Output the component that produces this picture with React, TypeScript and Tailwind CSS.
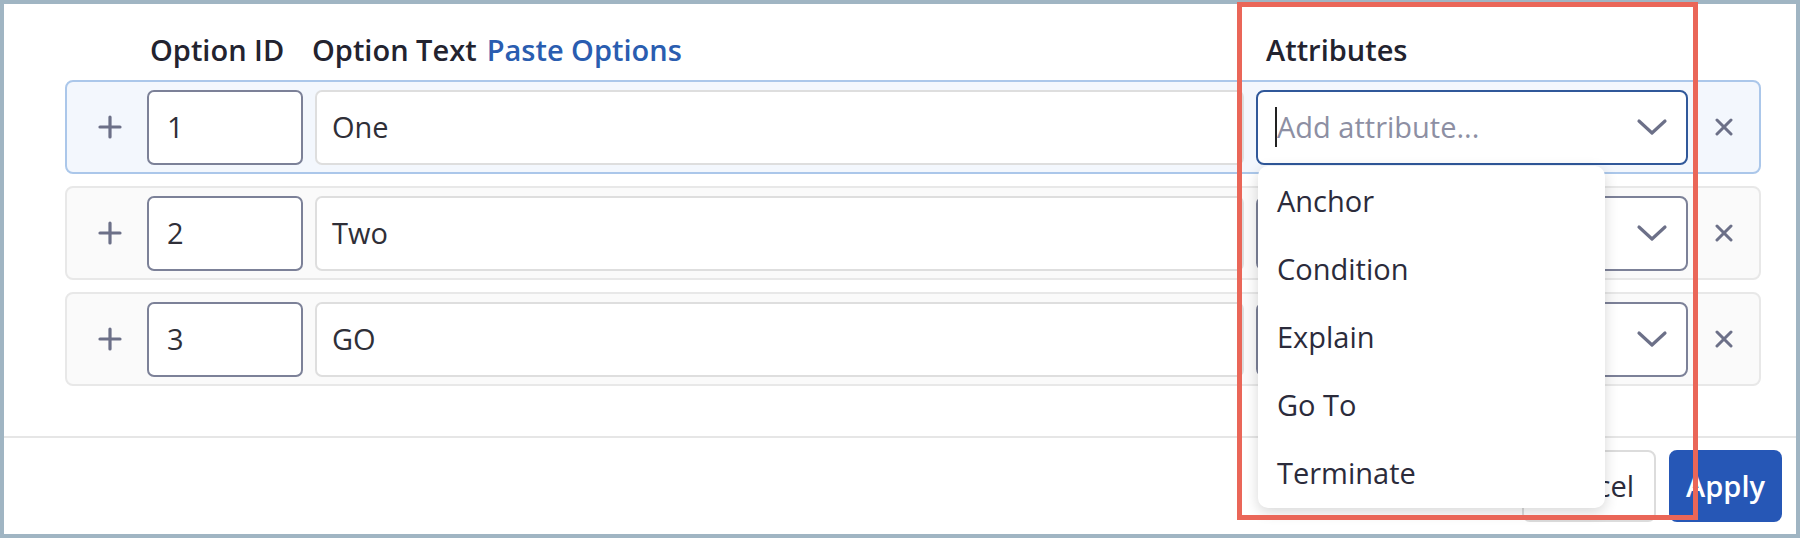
const rows = [
  { id: "1", text: "One", active: true },
  { id: "2", text: "Two", active: false },
  { id: "3", text: "GO", active: false },
];

const attributes = ["Anchor", "Condition", "Explain", "Go To", "Terminate"];

const PlusIcon = () => (
  <svg width="24" height="24" viewBox="0 0 24 24" fill="none" stroke="#6c7088" strokeWidth="3.2" strokeLinecap="round">
    <line x1="12" y1="2" x2="12" y2="22" />
    <line x1="2" y1="12" x2="22" y2="12" />
  </svg>
);

const CloseIcon = () => (
  <svg width="18" height="18" viewBox="0 0 18 18" fill="none" stroke="#6c7088" strokeWidth="3" strokeLinecap="round">
    <line x1="2" y1="2" x2="16" y2="16" />
    <line x1="16" y1="2" x2="2" y2="16" />
  </svg>
);

const Chevron = () => (
  <svg width="32" height="18" viewBox="0 0 32 18" fill="none" stroke="#6c7088" strokeWidth="3.2" strokeLinecap="round" strokeLinejoin="round">
    <polyline points="3,3 16,15 29,3" />
  </svg>
);

const AttributeMenu = () => (
  <div className="absolute left-[2px] top-full z-10 mt-[1px] w-[347px] rounded-[10px] bg-white py-[1px] shadow-[0_4px_14px_rgba(0,0,0,0.16)]">
    {attributes.map((a) => (
      <div key={a} className="flex h-[68px] items-center pl-[19px] text-[29px] text-[#2b2b3b]">
        {a}
      </div>
    ))}
  </div>
);

const OptionRow = ({ id, text, active }: { id: string; text: string; active: boolean }) => (
  <div
    className={
      active
        ? "flex h-[94px] items-center rounded-[8px] border-2 border-[#abc7ea] bg-[#f3f7fd]"
        : "flex h-[94px] items-center rounded-[8px] border-2 border-[#e8e8e8] bg-[#fafafa]"
    }
  >
    <div className="flex w-[80px] justify-center pl-[6px]">
      <PlusIcon />
    </div>
    <div className="flex h-[75px] w-[156px] items-center rounded-[7px] border-2 border-[#7c8198] bg-white pl-[18px] text-[29px] text-[#2f2f38]">
      {id}
    </div>
    <div className="ml-[12px] flex h-[75px] flex-1 items-center rounded-[7px] border-2 border-[#dedede] bg-white pl-[15px] text-[29px] text-[#2f2f38]">
      {text}
    </div>
    <div className="relative ml-[12px] w-[432px]">
      <div
        className={
          active
            ? "flex h-[75px] items-center rounded-[8px] border-2 border-[#30589a] bg-white pl-[17px] pr-[18px]"
            : "flex h-[75px] items-center rounded-[8px] border-2 border-[#7c8198] bg-white pl-[17px] pr-[18px]"
        }
      >
        {active && <span className="h-[40px] w-[2px] bg-[#222]" />}
        <span className="flex-1 text-[29px] text-[#8d8fa3]">{active ? "Add attribute..." : ""}</span>
        <Chevron />
      </div>
      {active && <AttributeMenu />}
    </div>
    <div className="flex w-[71px] justify-center">
      <CloseIcon />
    </div>
  </div>
);

export default function App() {
  return (
    <div
      className="relative h-[538px] w-[1800px] bg-[#a0b5c3] p-[4px]"
      style={{ fontFamily: "'Open Sans', 'Noto Sans', sans-serif" }}
    >
      <div className="flex h-full flex-col bg-white">
        <div className="pl-[61px] pr-[35px] pt-[26px]">
          <div className="flex h-[40px] items-center text-[29px] font-semibold text-[#23232f]">
            <div className="w-[85px]" />
            <div className="w-[162px]">Option ID</div>
            <div>Option Text</div>
            <div className="ml-[10px] text-[#2a5db0]">Paste Options</div>
            <div className="flex-1" />
            <div className="w-[495px]">Attributes</div>
          </div>
          <div className="mt-[10px] flex flex-col gap-[12px]">
            {rows.map((r) => (
              <OptionRow key={r.id} {...r} />
            ))}
          </div>
        </div>
        <div className="mt-[50px] flex justify-end gap-[13px] border-t-2 border-[#e6e6e6] pr-[14px] pt-[12px]">
          <button className="h-[72px] rounded-[8px] border-2 border-[#dcdcdc] bg-white px-[20px] text-[29px] text-[#2b2b3b]">
            Cancel
          </button>
          <button className="h-[72px] rounded-[8px] bg-[#2657b6] px-[17px] text-[29px] font-semibold text-white">
            Apply
          </button>
        </div>
      </div>
      <div className="pointer-events-none absolute left-[1237px] top-[2px] z-20 h-[518px] w-[461px] border-[5px] border-[#ea6658]" />
    </div>
  );
}
